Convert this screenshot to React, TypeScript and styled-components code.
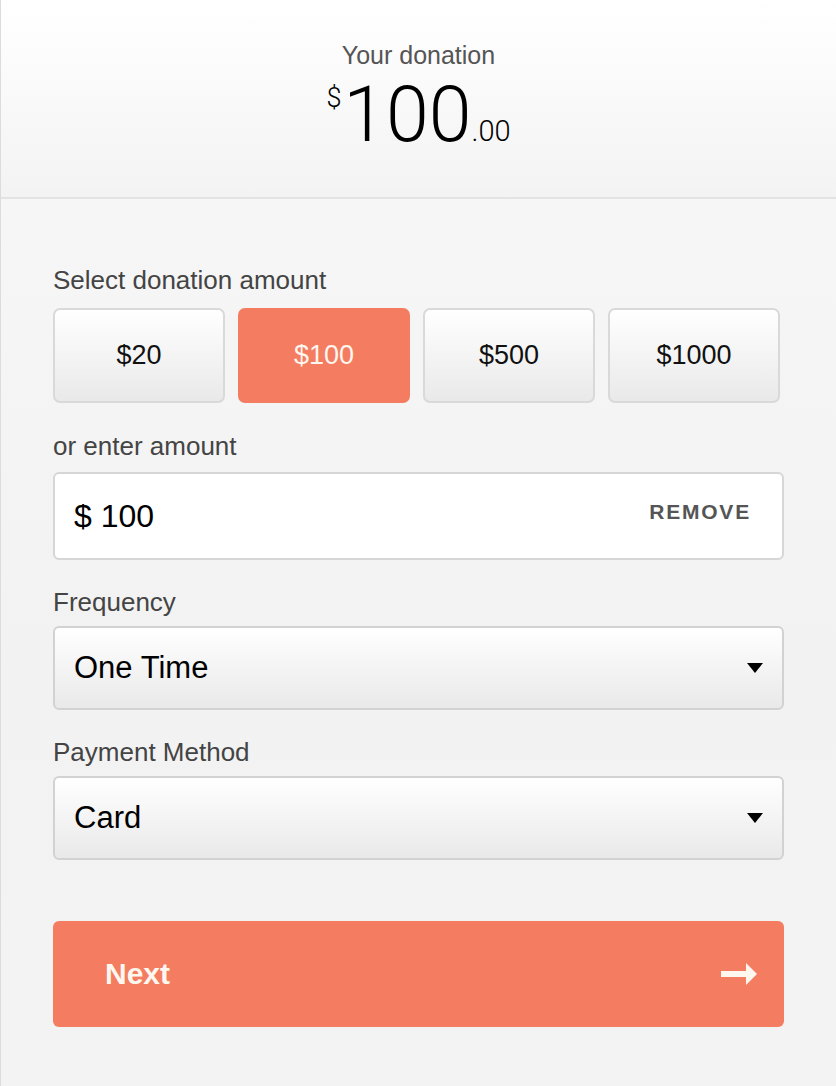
import React, { useState } from "react";
import styled, { createGlobalStyle } from "styled-components";

const GlobalStyle = createGlobalStyle`
  html, body {
    margin: 0;
    padding: 0;
    background: #f3f3f3;
  }
  body {
    font-family: "Liberation Sans", Arial, Helvetica, sans-serif;
  }
  *, *::before, *::after {
    box-sizing: border-box;
  }
`;

const Page = styled.div`
  width: 836px;
  min-height: 1086px;
  border-left: 1px solid #dcdcdc;
  background: linear-gradient(to bottom, #f8f8f8 0%, #f2f2f2 60%, #f3f3f3 100%);
`;

const Header = styled.header`
  height: 199px;
  border-bottom: 2px solid #e3e3e3;
  background: linear-gradient(to bottom, #ffffff 0%, #f3f3f3 100%);
  display: flex;
  flex-direction: column;
  align-items: center;
  padding-top: 40px;
`;

const HeaderTitle = styled.div`
  font-size: 25px;
  line-height: 30px;
  color: #555555;
`;

const AmountLine = styled.div`
  margin-top: 9px;
  font-family: Roboto, "Liberation Sans", Arial, sans-serif;
  font-weight: 300;
  font-size: 77px;
  line-height: 72px;
  color: #000000;
  white-space: nowrap;
`;

const Currency = styled.span`
  display: inline-block;
  vertical-align: top;
  font-size: 27px;
  line-height: 27px;
  padding-top: 6px;
  margin-right: 2px;
`;

const Cents = styled.span`
  font-size: 29px;
`;

const Content = styled.main`
  padding: 66px 52px 0 52px;
  display: flex;
  flex-direction: column;
`;

const Field = styled.section`
  display: flex;
  flex-direction: column;
  margin-bottom: 27px;
`;

const Label = styled.div<{ $gap?: number }>`
  font-size: 26px;
  line-height: 30px;
  color: #444444;
  margin-bottom: ${(p) => (p.$gap ?? 9)}px;
`;

const AmountGrid = styled.div`
  display: grid;
  grid-template-columns: repeat(4, 1fr);
  gap: 13px;
  margin-right: 4px;
  margin-bottom: 1px;
`;

const AmountButton = styled.button<{ $selected?: boolean }>`
  height: 95px;
  font: inherit;
  font-size: 27px;
  border-radius: 7px;
  cursor: pointer;
  border: 2px solid ${(p) => (p.$selected ? "#f37c61" : "#d9d9d9")};
  background: ${(p) =>
    p.$selected ? "#f37c61" : "linear-gradient(to bottom, #ffffff 0%, #e9e9e9 100%)"};
  color: ${(p) => (p.$selected ? "#fff6ee" : "#111111")};
  padding: 0;
`;

const InputBox = styled.div`
  height: 88px;
  display: flex;
  align-items: center;
  justify-content: space-between;
  padding: 0 31px 0 19px;
  background: #ffffff;
  border: 2px solid #d6d6d6;
  border-radius: 6px;
`;

const InputValue = styled.span`
  font-size: 32px;
  color: #000000;
`;

const RemoveLink = styled.span`
  font-size: 21px;
  font-weight: 700;
  letter-spacing: 1.8px;
  color: #555555;
  margin-bottom: 9px;
`;

const SelectBox = styled.div`
  height: 84px;
  display: flex;
  align-items: center;
  justify-content: space-between;
  padding: 0 19px 0 19px;
  border: 2px solid #d2d2d2;
  border-radius: 6px;
  background: linear-gradient(to bottom, #ffffff 0%, #e9e9e9 100%);
`;

const SelectValue = styled.span`
  font-size: 31px;
  color: #000000;
`;

const NextButton = styled.button`
  margin-top: 34px;
  height: 106px;
  font: inherit;
  font-size: 30px;
  font-weight: 700;
  color: #fdf7ef;
  background: #f37c61;
  border: none;
  border-radius: 6px;
  display: flex;
  align-items: center;
  justify-content: space-between;
  padding: 0 26px 0 52px;
  cursor: pointer;
`;

const Caret = () => (
  <svg width="16" height="10" viewBox="0 0 16 10" aria-hidden="true">
    <polygon points="0,0 16,0 8,10" fill="#000" />
  </svg>
);

const Arrow = () => (
  <svg width="37" height="22" viewBox="0 0 37 22" aria-hidden="true">
    <rect x="0" y="8" width="27" height="6" fill="#fdf7ef" />
    <polygon points="25,0 36,11 25,22" fill="#fdf7ef" />
  </svg>
);

const amounts = [20, 100, 500, 1000];

export default function App() {
  const [selected, setSelected] = useState(100);
  return (
    <>
      <GlobalStyle />
      <Page>
        <Header>
          <HeaderTitle>Your donation</HeaderTitle>
          <AmountLine>
            <Currency>$</Currency>
            {selected}
            <Cents>.00</Cents>
          </AmountLine>
        </Header>
        <Content>
          <Field>
            <Label $gap={13}>Select donation amount</Label>
            <AmountGrid>
              {amounts.map((a) => (
                <AmountButton key={a} $selected={a === selected} onClick={() => setSelected(a)}>
                  ${a}
                </AmountButton>
              ))}
            </AmountGrid>
          </Field>
          <Field>
            <Label $gap={11}>or enter amount</Label>
            <InputBox>
              <InputValue>$ {selected}</InputValue>
              <RemoveLink>REMOVE</RemoveLink>
            </InputBox>
          </Field>
          <Field>
            <Label>Frequency</Label>
            <SelectBox>
              <SelectValue>One Time</SelectValue>
              <Caret />
            </SelectBox>
          </Field>
          <Field>
            <Label>Payment Method</Label>
            <SelectBox>
              <SelectValue>Card</SelectValue>
              <Caret />
            </SelectBox>
          </Field>
          <NextButton>
            <span>Next</span>
            <Arrow />
          </NextButton>
        </Content>
      </Page>
    </>
  );
}
